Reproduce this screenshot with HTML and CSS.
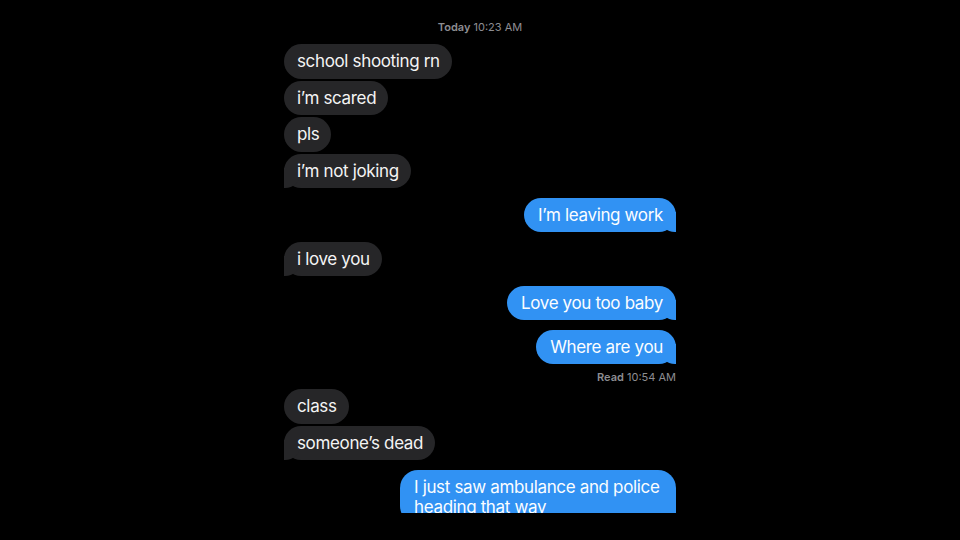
FILE: index.html
```html
<!DOCTYPE html>
<html lang="en">
<head>
<meta charset="utf-8">
<title>Messages</title>
<link rel="stylesheet" href="styles.css">
</head>
<body>
<main class="chat">
  <div class="stamp"><b>Today</b> 10:23 AM</div>

  <div class="group them">
    <div class="bubble">school shooting rn</div>
    <div class="bubble">i’m scared</div>
    <div class="bubble">pls</div>
    <div class="bubble tail">i’m not joking</div>
  </div>

  <div class="group me">
    <div class="bubble tail">I’m leaving work</div>
  </div>

  <div class="group them">
    <div class="bubble tail">i love you</div>
  </div>

  <div class="group me">
    <div class="bubble tail">Love you too baby</div>
  </div>

  <div class="group me">
    <div class="bubble tail">Where are you</div>
    <div class="receipt"><b>Read</b> 10:54 AM</div>
  </div>

  <div class="group them">
    <div class="bubble">class</div>
    <div class="bubble tail">someone’s dead</div>
  </div>

  <div class="group me">
    <div class="bubble tail">I just saw ambulance and police heading that way</div>
  </div>
</main>
</body>
</html>
```

FILE: styles.css
```css
* { box-sizing: border-box; }

html, body {
  margin: 0;
  padding: 0;
  background: #000;
}

body {
  font-family: Inter, "Noto Sans", "Liberation Sans", sans-serif;
  color: #f4f4f4;
}

.chat {
  width: 392px;
  height: 513px;
  margin: 0 auto;
  padding-top: 20px;
  overflow: hidden;
  display: flex;
  flex-direction: column;
  gap: 9.5px;
}

.chat > * { flex-shrink: 0; }

.stamp {
  text-align: center;
  font-size: 11px;
  line-height: 14px;
  color: #8d8d92;
  margin-bottom: 0.5px;
}

.stamp b, .receipt b { font-weight: 600; }

.group {
  display: flex;
  flex-direction: column;
  gap: 2px;
}

.them { align-items: flex-start; }
.me { align-items: flex-end; }

.bubble {
  position: relative;
  z-index: 0;
  max-width: 276px;
  padding: 7.25px 13px 7.25px 13px;
  border-radius: 18px;
  font-size: 17px;
  line-height: 20px;
  letter-spacing: -0.35px;
}

.them .bubble { background: #262628; padding-right: 12px; }
.me .bubble { background: #3192f3; color: #fbfdff; padding-left: 14px; }

.bubble.tail::before,
.bubble.tail::after {
  content: "";
  position: absolute;
  z-index: -1;
  bottom: 0;
  height: 20px;
}

.them .bubble.tail::before {
  left: -6px;
  width: 22px;
  background: #262628;
  border-bottom-right-radius: 15px 14px;
}
.them .bubble.tail::after {
  left: -26px;
  width: 26px;
  background: #000;
  border-bottom-right-radius: 10px;
}

.me .bubble.tail::before {
  right: -6px;
  width: 22px;
  background: #3192f3;
  border-bottom-left-radius: 15px 14px;
}
.me .bubble.tail::after {
  right: -26px;
  width: 26px;
  background: #000;
  border-bottom-left-radius: 10px;
}

.receipt {
  margin-top: 4px;
  margin-bottom: -4.5px;
  font-size: 11px;
  line-height: 14px;
  color: #8d8d92;
}
```
